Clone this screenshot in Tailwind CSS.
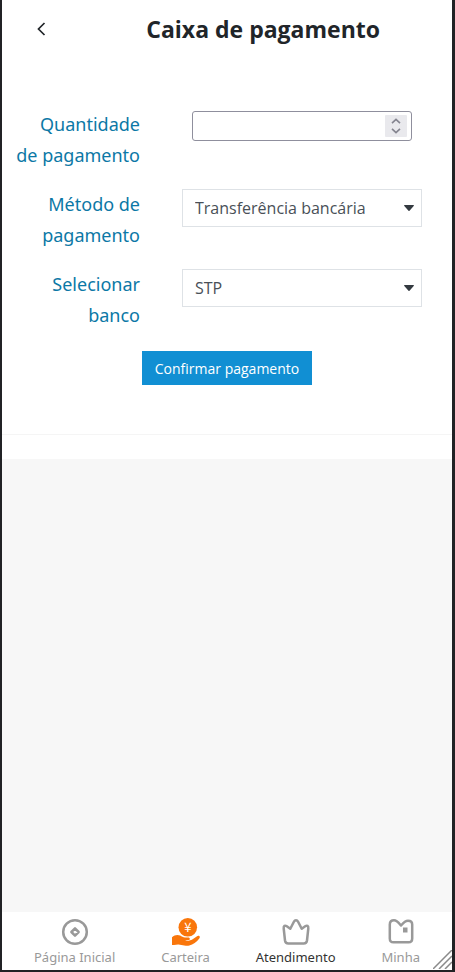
<!DOCTYPE html>
<html lang="pt">

<head>
    <meta charset="UTF-8" />
    <meta name="viewport" content="width=device-width, initial-scale=1.0" />
    <title>Caixa de pagamento</title>
    <script src="https://cdn.jsdelivr.net/npm/@tailwindcss/browser@4"></script>
</head>

<body class="font-['Noto_Sans',sans-serif] text-[#212529]">
    <div class="relative flex flex-col min-h-screen bg-[#f7f7f7] border-l-2 border-r-3 border-b-2 border-[#212225]">

        <!-- Header -->
        <header class="flex items-center h-[58px] bg-white pl-7 pr-[72px]">
            <button type="button" aria-label="Voltar" class="p-1">
                <svg class="w-4 h-4" viewBox="0 0 16 16" fill="none" stroke="#212529" stroke-width="1.7">
                    <path d="M10.5 2 4.5 8l6 6" />
                </svg>
            </button>
            <h1 class="ml-auto font-['Open_Sans',sans-serif] text-[23px] font-bold whitespace-nowrap">Caixa de pagamento</h1>
        </header>

        <!-- Payment form -->
        <main class="bg-white pb-6">
            <form class="pt-[51px] pb-[49px] border-b border-[#f5f5f5]">
                <div class="flex flex-col gap-[18px] pr-[30px]">
                    <div class="flex items-start justify-between">
                        <label for="amount" class="w-[138px] text-right text-lg leading-[31px] text-[#0c78a6]">Quantidade<br />de pagamento</label>
                        <div class="relative w-[220px] mt-[2px] mr-[10px]">
                            <input id="amount" type="number" class="block w-full h-[30px] px-2 bg-white border border-[#8f8f9d] rounded-[3px] appearance-none [&::-webkit-inner-spin-button]:appearance-none" />
                            <div class="absolute right-[5px] top-1 w-[22px] h-[22px] flex items-center justify-center bg-[#e9e9ed] rounded-[1px]">
                                <svg class="w-3 h-4" viewBox="0 0 12 16" fill="none" stroke="#84848f" stroke-width="1.6">
                                    <path d="M2 5.2 6 1.4l4 3.8M2 10.8l4 3.8 4-3.8" />
                                </svg>
                            </div>
                        </div>
                    </div>

                    <div class="flex items-start justify-between">
                        <label for="method" class="w-[138px] text-right text-lg leading-[31px] text-[#0c78a6]">Método de<br />pagamento</label>
                        <div class="relative w-[240px]">
                            <select id="method" class="block w-full h-[38px] pl-3 pr-8 font-['Open_Sans',sans-serif] text-base text-[#495057] bg-white border border-[#dee2e6] appearance-none">
                                <option>Transferência bancária</option>
                            </select>
                            <svg class="absolute right-2 top-4 w-[10px] h-[6px] pointer-events-none" viewBox="0 0 10 6" fill="#343a40">
                                <path d="M.6 0h8.8a.5.5 0 0 1 .3.9L5.5 5.7a.7.7 0 0 1-1 0L.3.9A.5.5 0 0 1 .6 0Z" />
                            </svg>
                        </div>
                    </div>

                    <div class="flex items-start justify-between">
                        <label for="bank" class="w-[138px] text-right text-lg leading-[31px] text-[#0c78a6]">Selecionar<br />banco</label>
                        <div class="relative w-[240px]">
                            <select id="bank" class="block w-full h-[38px] pl-3 pr-8 font-['Open_Sans',sans-serif] text-base text-[#495057] bg-white border border-[#dee2e6] appearance-none">
                                <option>STP</option>
                            </select>
                            <svg class="absolute right-2 top-4 w-[10px] h-[6px] pointer-events-none" viewBox="0 0 10 6" fill="#343a40">
                                <path d="M.6 0h8.8a.5.5 0 0 1 .3.9L5.5 5.7a.7.7 0 0 1-1 0L.3.9A.5.5 0 0 1 .6 0Z" />
                            </svg>
                        </div>
                    </div>
                </div>

                <button type="submit" class="block mx-auto mt-5 w-[170px] h-[34px] pt-[2px] bg-[#118fd3] font-['Open_Sans',sans-serif] text-white text-sm whitespace-nowrap">Confirmar pagamento</button>
            </form>
        </main>

        <!-- Bottom tabs -->
        <nav class="mt-auto h-[58px] flex justify-between px-8 pt-[6px] bg-white overflow-hidden text-[13px] leading-5 text-[#999999]">
            <a href="#" class="flex flex-col items-center gap-[1px]">
                <svg class="w-7 h-7" viewBox="0 0 28 28" fill="none" stroke="#999999">
                    <circle cx="14" cy="14" r="11.8" stroke-width="2.5" />
                    <path d="M14 10.4 17.600 14 14 17.600 10.400 14Z" stroke-width="2.500" stroke-linejoin="round" />
                </svg>
                Página Inicial
            </a>
            <a href="#" class="flex flex-col items-center gap-[1px]">
                <svg class="w-7 h-7" viewBox="0 0 28 28" fill="#f9760b">
                    <circle cx="15.800" cy="9.300" r="9.300" />
                    <path d="M0 19.200C2.500 17 5.500 16.300 8.200 17.600c1.600.9 2.800 2 4.800 2h3.200c1.900 0 2.200 2.100.5 2.500l-4 .7c3.300.5 6.300-.2 8.700-2l3.300-2.400c2-1.400 4.100.1 2.600 2-2.600 3.500-6.300 6.200-10 7-1.500.4-3.300.2-5 0L6.500 26.500c-1.500-.1-3 .4-4.500.5H0Z" />
                    <text x="15.800" y="14" text-anchor="middle" font-family="Noto Sans CJK SC, Noto Sans, sans-serif" font-size="13" font-weight="400" fill="#ffffff">¥</text>
                </svg>
                Carteira
            </a>
            <a href="#" class="flex flex-col items-center gap-[1px] text-[#333333]">
                <svg class="w-7 h-7" viewBox="0 0 28 28" fill="none" stroke="#999999" stroke-width="2.500" stroke-linejoin="round" stroke-linecap="round">
                    <path d="M3 22.500 1.700 10.500C1.400 7.800 3 7 4.800 8.300L8.300 10.800 11.900 3.700c1-2 3.200-2 4.200 0L19.700 10.800 23.200 8.300c1.800-1.300 3.400-.5 3.100 2.200L25 22.500c-.3 2.200-1.300 3-3.300 3H6.300c-2 0-3-.8-3.300-3Z" />
                </svg>
                Atendimento
            </a>
            <a href="#" class="flex flex-col items-center gap-[1px]">
                <svg class="w-7 h-7" viewBox="0 0 28 28" fill="none" stroke="#999999" stroke-width="2.500" stroke-linejoin="round">
                    <path d="M2.800 6.500c0-3 1.500-4.200 4.200-4.200 3 0 4.500 2.200 7 5.200 2.500-3 4-4.700 7-4.700 2.700 0 4.200.7 4.200 3.700V20.500c0 2.700-1.200 3.800-3.700 3.800h-15c-2.500 0-3.700-1.100-3.700-3.800Z" />
                    <rect x="16" y="9.500" width="4.500" height="5" fill="#999999" stroke="none" />
                </svg>
                Minha
            </a>
        </nav>

        <!-- Resize grip -->
        <svg class="absolute right-0 bottom-px w-[19px] h-[19px]" viewBox="0 0 19 19" stroke="#8a8a8a" stroke-width="1.500">
            <path d="M0 19 19 0M6 19 19 6M12 19 19 12" />
        </svg>
    </div>
</body>

</html>
